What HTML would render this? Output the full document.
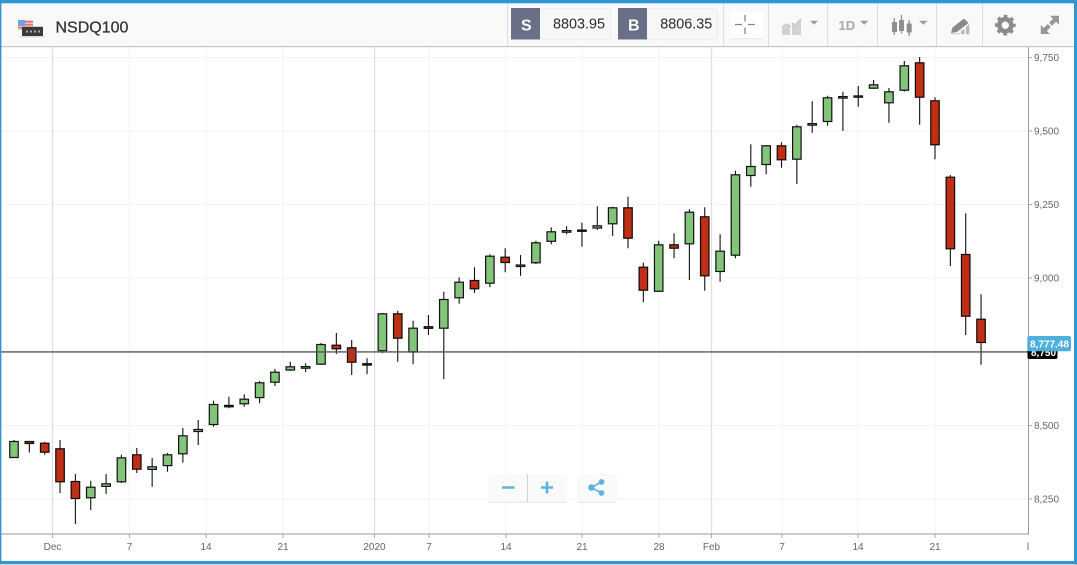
<!DOCTYPE html>
<html lang="en">
<head>
<meta charset="utf-8">
<title>NSDQ100</title>
<style>
html,body{margin:0;padding:0;background:#fff;width:1077px;height:565px;overflow:hidden}
svg{display:block;font-family:"Liberation Sans",Arial,sans-serif}
.y{font-size:10px;fill:#666}
.x{font-size:10px;fill:#666;text-anchor:middle}
.g rect{fill:#83c47b;stroke:#111;stroke-width:1.2}
.r rect{fill:#bf2e15;stroke:#0a0a0a;stroke-width:1.2}
</style>
</head>
<body>
<svg width="1077" height="565" viewBox="0 0 1077 565" xmlns="http://www.w3.org/2000/svg">
<rect width="1077" height="565" fill="#fff"/>

<path fill="none" stroke="#f3f3f3" stroke-width="1" d="M0 57.5H1028M0 131H1028M0 204.5H1028M0 278H1028M0 425.5H1028M0 499H1028M129.5 47V534M206 47V534M283 47V534M429 47V534M506 47V534M582 47V534M659 47V534M782 47V534M858 47V534M935 47V534"/>
<path fill="none" stroke="#dedede" stroke-width="1.2" d="M52.5 47V534M374.5 47V534M711.5 47V534"/>

<path fill="none" stroke="#111" stroke-width="1.1" d="M14 440V458M29.35 441V452.5M44.7 442V454.7M60.05 440V493M75.4 474V524M90.75 480.7V510M106.1 474V494M121.45 454.7V483M136.8 448V473M152.15 458V486.7M167.5 453V471.7M182.85 428V462.7M198.2 420V445M213.55 400.7V426.7M228.9 396.7V408.3M244.25 394.3V406.7M259.6 381V403.3M274.95 369V386M290.3 361.7V371M305.65 363.3V372M321 343V365M336.35 333V354M351.7 340V375M367.05 358.3V374.3M382.4 313V353M397.75 310.7V361.7M413.1 320.7V364.3M428.45 315V335M443.8 291.7V379M459.15 277.3V303.7M474.5 267.3V293M489.85 254.3V287.3M505.2 248.3V272.3M520.55 255V275.7M535.9 240.7V264M551.25 227.3V244.3M566.6 226.3V234.3M581.95 222.7V246.7M597.3 206.3V229.7M612.65 206.7V236M628 196.7V248.3M643.35 262.7V302.3M658.7 240.7V292M674.05 233.3V258.3M689.4 209.3V280M704.75 207.3V290.7M720.1 234.3V281.7M735.45 170.7V258.3M750.8 144.3V186.7M766.15 145V174.3M781.5 142.3V167.7M796.85 124.7V184M812.2 101.3V132.7M827.55 95.7V125.7M842.9 91.7V131M858.25 86V106.7M873.6 80V89M888.95 88V122.7M904.3 61V91.5M919.65 57V124.7M935 97.3V159.3M950.35 175V266M965.7 213.3V335M981.05 294.3V364.7"/>

<g class="g">
<rect x="9.75" y="441.5" width="8.5" height="16"/>
<rect x="86.5" y="487.2" width="8.5" height="10.6"/>
<rect x="101.85" y="483.8" width="8.5" height="2.6"/>
<rect x="117.2" y="457.8" width="8.5" height="24"/>
<rect x="147.9" y="466.8" width="8.5" height="2.6"/>
<rect x="163.25" y="454.8" width="8.5" height="10.8"/>
<rect x="178.6" y="435.8" width="8.5" height="18"/>
<rect x="193.95" y="429.5" width="8.5" height="2"/>
<rect x="209.3" y="404.5" width="8.5" height="20"/>
<rect x="240" y="399.2" width="8.5" height="4.6"/>
<rect x="255.35" y="382.8" width="8.5" height="14.8"/>
<rect x="270.7" y="372.2" width="8.5" height="10"/>
<rect x="286.05" y="366.8" width="8.5" height="3.2"/>
<rect x="301.4" y="366.6" width="8.5" height="1.6"/>
<rect x="316.75" y="344.5" width="8.5" height="19.7"/>
<rect x="378.15" y="313.8" width="8.5" height="37"/>
<rect x="408.85" y="328.2" width="8.5" height="23.6"/>
<rect x="439.55" y="299.5" width="8.5" height="28.7"/>
<rect x="454.9" y="282.2" width="8.5" height="15.6"/>
<rect x="485.6" y="256.2" width="8.5" height="27"/>
<rect x="516.3" y="265" width="8.5" height="1.5"/>
<rect x="531.65" y="242.8" width="8.5" height="20"/>
<rect x="547" y="231.8" width="8.5" height="9.5"/>
<rect x="562.35" y="230.6" width="8.5" height="1.6"/>
<rect x="593.05" y="225.8" width="8.5" height="2.2"/>
<rect x="608.4" y="207.8" width="8.5" height="16"/>
<rect x="654.45" y="244.8" width="8.5" height="46.5"/>
<rect x="685.15" y="212.2" width="8.5" height="31.6"/>
<rect x="715.85" y="251.2" width="8.5" height="20.3"/>
<rect x="731.2" y="174.8" width="8.5" height="80.4"/>
<rect x="746.55" y="166.5" width="8.5" height="9"/>
<rect x="761.9" y="145.8" width="8.5" height="18.7"/>
<rect x="792.6" y="126.8" width="8.5" height="32.4"/>
<rect x="807.95" y="123.6" width="8.5" height="1.6"/>
<rect x="823.3" y="97.8" width="8.5" height="23.7"/>
<rect x="838.65" y="96.6" width="8.5" height="1.5"/>
<rect x="854" y="95.9" width="8.5" height="1.3"/>
<rect x="869.35" y="84.8" width="8.5" height="3.4"/>
<rect x="884.7" y="91.8" width="8.5" height="11"/>
<rect x="900.05" y="65.8" width="8.5" height="24.4"/>
</g>

<g class="r">
<rect x="25.1" y="441.5" width="8.5" height="2"/>
<rect x="40.45" y="443.2" width="8.5" height="9"/>
<rect x="55.8" y="448.8" width="8.5" height="33"/>
<rect x="71.15" y="481.5" width="8.5" height="17"/>
<rect x="132.55" y="454.8" width="8.5" height="14.4"/>
<rect x="224.65" y="405.4" width="8.5" height="1.4"/>
<rect x="332.1" y="345.2" width="8.5" height="3.6"/>
<rect x="347.45" y="347.8" width="8.5" height="14.4"/>
<rect x="362.8" y="363.7" width="8.5" height="1.4"/>
<rect x="393.5" y="313.8" width="8.5" height="24.4"/>
<rect x="424.2" y="326.7" width="8.5" height="1.6"/>
<rect x="470.25" y="280.5" width="8.5" height="8.3"/>
<rect x="500.95" y="257.2" width="8.5" height="5.3"/>
<rect x="577.7" y="230.1" width="8.5" height="1.2"/>
<rect x="623.75" y="207.8" width="8.5" height="30.4"/>
<rect x="639.1" y="267.2" width="8.5" height="23"/>
<rect x="669.8" y="244.8" width="8.5" height="3.4"/>
<rect x="700.5" y="216.8" width="8.5" height="59"/>
<rect x="777.25" y="145.8" width="8.5" height="14"/>
<rect x="915.4" y="62.8" width="8.5" height="34.4"/>
<rect x="930.75" y="100.8" width="8.5" height="44"/>
<rect x="946.1" y="177.2" width="8.5" height="71.6"/>
<rect x="961.45" y="254.5" width="8.5" height="61.7"/>
<rect x="976.8" y="319.2" width="8.5" height="23.3"/>
</g>

<rect x="0" y="351" width="1028" height="1.8" fill="#555" opacity=".75"/>

<path fill="none" stroke="#999" stroke-width="1" d="M1028.5 47V534M0 534H1029"/>
<path fill="none" stroke="#aaa" stroke-width="1" d="M1028 57.5H1032M1028 131H1032M1028 204.5H1032M1028 278H1032M1028 425.5H1032M1028 499H1032M52.5 534V538M129.5 534V538M206 534V538M283 534V538M374.5 534V538M429 534V538M506 534V538M582 534V538M659 534V538M711.5 534V538M782 534V538M858 534V538M935 534V538"/>

<text class="y" x="1034" y="61">9,750</text>
<text class="y" x="1034" y="134.5">9,500</text>
<text class="y" x="1034" y="208">9,250</text>
<text class="y" x="1034" y="281.5">9,000</text>
<text class="y" x="1034" y="429">8,500</text>
<text class="y" x="1034" y="502.5">8,250</text>

<text class="x" x="52.5" y="550">Dec</text>
<text class="x" x="129.5" y="550">7</text>
<text class="x" x="206" y="550">14</text>
<text class="x" x="283" y="550">21</text>
<text class="x" x="374.5" y="550">2020</text>
<text class="x" x="429" y="550">7</text>
<text class="x" x="506" y="550">14</text>
<text class="x" x="582" y="550">21</text>
<text class="x" x="659" y="550">28</text>
<text class="x" x="711.5" y="550">Feb</text>
<text class="x" x="782" y="550">7</text>
<text class="x" x="858" y="550">14</text>
<text class="x" x="935" y="550">21</text>
<text class="x" x="1028" y="550">l</text>

<rect x="1027.5" y="345" width="30" height="14" rx="2" fill="#050505"/>
<text x="1031" y="356" font-size="10" font-weight="700" fill="#fff">8,750</text>
<rect x="1027.3" y="336" width="43.7" height="15.3" rx="2" fill="#4db0dd"/>
<text x="1030" y="347.5" font-size="10" font-weight="700" fill="#fff">8,777.48</text>

<rect x="0" y="3" width="1077" height="43" fill="#f9f9f9"/>
<rect x="0" y="46" width="1077" height="1.2" fill="#c6c6c6"/>
<path fill="none" stroke="#dcdcdc" stroke-width="1" d="M507.5 3V46M723.5 3V46M768.5 3V46M827.5 3V46M877.5 3V46M936.5 3V46M982.5 3V46"/>

<rect x="18" y="20" width="15" height="10" fill="#f2c9c9"/>
<path fill="#e36f6f" d="M25 21h8v1.5h-8zM25 24h8v1.5h-8zM18 27h15v1.5H18z"/>
<rect x="18" y="20" width="7" height="6" fill="#6fa3e6"/>
<rect x="20" y="36" width="25" height="1.5" fill="#ddd"/>
<rect x="22" y="26.8" width="21" height="9.2" fill="#3a3a38"/>
<path fill="none" stroke="#aaa" stroke-width="2" stroke-dasharray="2 2" d="M26 31.5H40"/>

<text x="55.5" y="32.5" font-size="16" fill="#333" stroke="#333" stroke-width=".25">NSDQ100</text>

<rect x="511.5" y="8.5" width="99" height="30.5" rx="2" fill="#f7f7f7" stroke="#ececec"/>
<rect x="511" y="8" width="29" height="31.5" fill="#6a6f88"/>
<text x="521" y="30.5" font-size="16" font-weight="700" fill="#fff">S</text>
<text x="553" y="28.5" font-size="14.4" fill="#2c2c2c">8803.95</text>
<rect x="618.5" y="8.5" width="99" height="30.5" rx="2" fill="#f7f7f7" stroke="#ececec"/>
<rect x="618" y="8" width="29" height="31.5" fill="#6a6f88"/>
<text x="628" y="30.5" font-size="16" font-weight="700" fill="#fff">B</text>
<text x="660.3" y="28.5" font-size="14.4" fill="#2c2c2c">8806.35</text>

<rect x="729.5" y="11.5" width="33.5" height="27" rx="3" fill="#fff"/>
<path fill="none" stroke="#e6e6e6" stroke-width="1" d="M730 38.7H762.5"/>
<path fill="none" stroke="#858585" stroke-width="1.3" d="M735 24.5H742M748 24.5H755M745 15V21.5M745 27.5V34"/>

<path fill="#d2d2d2" d="M782 28l5-3 3 2v8h-8zM792 24l3 1 6-5v15h-9z"/>
<path fill="none" stroke="#c0c0c0" stroke-width="1.2" d="M782 27l5-3 4 3M792 23l3 2 6-6"/>
<path fill="#9c9c9c" d="M810 20.7h8l-4 4z"/>

<text x="838.5" y="30" font-size="13" font-weight="700" fill="#a8a8a8">1D</text>
<path fill="#9c9c9c" d="M860 20.8h8.5l-4.2 4z"/>

<path fill="none" stroke="#8f8f8f" stroke-width="1.3" d="M894.3 18V35M901.5 15V33.5M909.2 20V36"/>
<path fill="#8f8f8f" d="M892 22h5v10h-5zM899 20h5v11h-5zM906.7 23.5h5v9h-5z"/>
<path fill="#9c9c9c" d="M919 20.8h8.5l-4.2 4z"/>

<path fill="#8a8a8a" d="M951 33l1.5-5.5L964 18.5l4.5 4.5L957 32z"/>
<path fill="#b9b9b9" d="M969.3 24v10.2H966V27zM964.5 28.5v5.7H961v-2.7z"/>
<path fill="#c4c4c4" d="M951 34.2h9v-1h-8z"/>

<circle cx="1005.3" cy="25.2" r="6" fill="none" stroke="#8a8a8a" stroke-width="4.6"/>
<circle cx="1005.3" cy="25.2" r="9" fill="none" stroke="#8a8a8a" stroke-width="2.8" stroke-dasharray="3.53 3.54" stroke-dashoffset="1.76"/>

<path fill="#979797" d="M1050 15.8h9v9l-3-3-4 4-3-3 4-4zM1040.8 34v-9l3 3 4-4 3 3-4 4 3 3z"/>

<rect x="488" y="474" width="79.5" height="28" rx="3" fill="#fafafa"/>
<path fill="none" stroke="#e4e4e4" stroke-width="1" d="M489 502.3H567"/>
<path stroke="#d4d4d4" stroke-width="1" d="M527.5 474V502"/>
<rect x="577" y="474" width="40" height="28" rx="3" fill="#fafafa"/>
<path fill="none" stroke="#e4e4e4" stroke-width="1" d="M578 502.3H616"/>
<path fill="none" stroke="#5fb3df" stroke-width="2.6" d="M502 487.5H514.5M541 487.5H553M547 481.5V493.5"/>
<g fill="#5fb3df">
<circle cx="601.5" cy="482" r="2.9"/>
<circle cx="591.5" cy="487.5" r="3.3"/>
<circle cx="601.5" cy="493" r="2.9"/>
</g>
<path fill="none" stroke="#5fb3df" stroke-width="1.6" d="M601.5 482L591.5 487.5L601.5 493"/>

<rect x="0" y="0" width="1077" height="3.3" fill="#2f96d6"/>
<rect x="0" y="0" width="1.4" height="564.3" fill="#2f96d6"/>
<rect x="1074" y="0" width="3" height="564.3" fill="#2f96d6"/>
<rect x="0" y="561" width="1077" height="3.3" fill="#2f96d6"/>
</svg>
</body>
</html>
